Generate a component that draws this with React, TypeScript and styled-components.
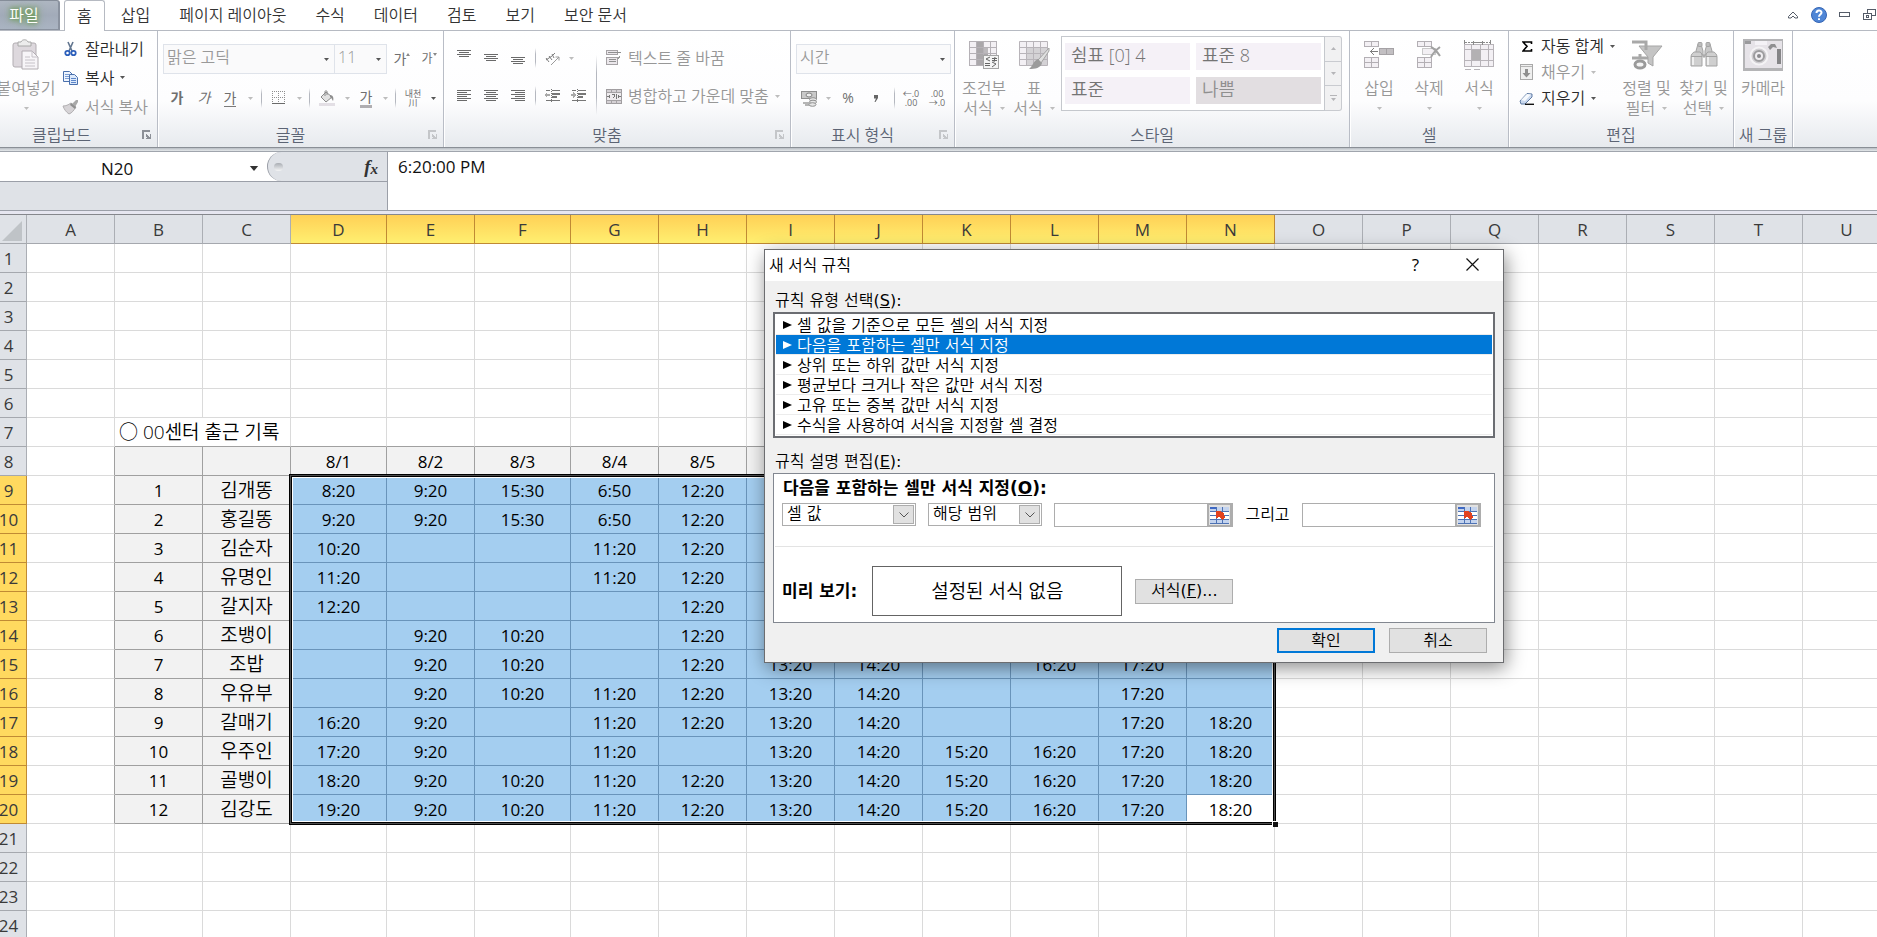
import React from 'react';
import styled, { createGlobalStyle, css } from 'styled-components';

const UI = '"Open Sans", "Noto Sans CJK KR", sans-serif';
const DIALOG = '"DejaVu Sans", "Noto Sans CJK KR", sans-serif';

const GlobalStyle = createGlobalStyle`
  *, *::before, *::after { box-sizing: border-box; }
  body { margin: 0; font-family: ${UI}; font-size: 16px; font-weight: 350; color: #333; background: #fff; overflow: hidden; }
  button, input, select { font: inherit; color: inherit; margin: 0; padding: 0; border: 0; background: none; border-radius: 0; outline: none; }
  button { white-space: nowrap; cursor: default; }
  svg { display: block; flex: none; }
`;

const Page = styled.div`
  position: relative;
  display: flex;
  flex-direction: column;
  height: 100vh;
  overflow: hidden;
`;

/* ---------- tab strip ---------- */

const TabBar = styled.header`
  display: flex;
  align-items: stretch;
  height: 31px;
  flex: none;
  border-bottom: 1px solid #b6bac2;
`;

const FileTab = styled.button`
  width: 60px;
  padding: 0 10px 2px 0;
  color: #fff;
  background: linear-gradient(#aeb6c1, #a2abb9 50%, #aab4c2);
  border-top: 1px solid #858d99;
  border-right: 2px solid #8a929f;
  border-bottom: 1px solid #8a929f;
  border-top-right-radius: 3px;
  text-shadow: 0 0 4px #5c9040, 0 0 6px #6f9f50, 0 0 8px #7fa869;
`;

const Tabs = styled.nav`
  display: flex;
  flex: 1;
  padding-left: 4px;
`;

const Tab = styled.button<{ $active?: boolean }>`
  padding: 0 14px 2px 15px;
  color: #333;
  ${p => p.$active && css`
    padding: 0 12px 2px;
    margin-right: 1px;
    margin-bottom: -1px;
    background: #fff;
    border: 1px solid #b6bac2;
    border-bottom: 0;
    border-radius: 3px 3px 0 0;
  `}
`;

const WindowTools = styled.div`
  display: flex;
  align-items: center;
  gap: 12px;
  overflow: hidden;
  width: 90px;
`;

/* ---------- ribbon ---------- */

const Ribbon = styled.div`
  display: flex;
  flex: none;
  height: 116px;
  overflow: hidden;
  background: linear-gradient(#fff, #fdfdfe 60%, #e7eaee);
`;

const Group = styled.section<{ $w: number }>`
  display: flex;
  flex-direction: column;
  flex: none;
  width: ${p => p.$w}px;
  border-right: 1px solid #b9bdc6;
  box-shadow: 1px 0 #fff;
`;

const GroupBody = styled.div<{ $pad?: string }>`
  display: flex;
  flex: 1;
  min-height: 0;
  padding: ${p => p.$pad ?? '0'};
`;

const GroupLabel = styled.div<{ $inset: number }>`
  display: flex;
  align-items: center;
  justify-content: center;
  height: 24px;
  flex: none;
  line-height: 20px;
  color: #5c6474;
  padding: 0 5px 1px;
  white-space: nowrap;
  & > span { flex: 1; padding-right: ${p => p.$inset}px; text-align: center; }
`;

const Stack = styled.div<{ $gap?: number }>`
  display: flex;
  flex-direction: column;
  flex: none;
  gap: ${p => p.$gap ?? 0}px;
`;

const Row = styled.div`
  display: flex;
  align-items: center;
`;

const BigButton = styled.button<{ $w: number }>`
  display: flex;
  flex-direction: column;
  align-items: center;
  flex: none;
  width: ${p => p.$w}px;
  padding-top: 7px;
  line-height: 20px;
  color: #979797;
`;

const BigIcon = styled.span`
  display: flex;
  align-items: center;
  height: 34px;
  margin-bottom: 6px;
`;

const BigLine = styled.span`
  display: flex;
  align-items: center;
  gap: 7px;
  height: 20px;
`;

const SmallButton = styled.button<{ $h: number; $off?: boolean }>`
  display: flex;
  align-items: center;
  gap: 6px;
  height: ${p => p.$h}px;
  line-height: 20px;
  color: ${p => (p.$off ? '#979797' : '#2b2b2b')};
`;

const IconSlot = styled.span<{ $w: number }>`
  display: flex;
  justify-content: center;
  width: ${p => p.$w}px;
`;

const Tool = styled.button<{ $w: number }>`
  display: flex;
  align-items: center;
  justify-content: center;
  flex: none;
  width: ${p => p.$w}px;
  height: 24px;
  font-size: 14px;
  line-height: 16px;
  color: #6f6f6f;
`;

const Glyph = styled.span<{ $kind?: 'bold' | 'italic' | 'under' | 'bar' | 'small' | 'tiny' }>`
  font-weight: 400;
  ${p => p.$kind === 'bold' && 'font-weight: 700;'}
  ${p => p.$kind === 'italic' && 'font-style: italic;'}
  ${p => p.$kind === 'under' && 'border-bottom: 1px solid #7a7a7a;'}
  ${p => p.$kind === 'bar' && 'border-bottom: 3px solid #b0aeb1;'}
  ${p => p.$kind === 'small' && 'font-size: 12px;'}
  ${p => p.$kind === 'tiny' && 'display: flex; flex-direction: column; align-items: center; font-size: 9px; line-height: 9px;'}
`;

const Divider = styled.span<{ $h: number }>`
  flex: none;
  width: 8px;
  height: ${p => p.$h}px;
  background: linear-gradient(transparent, #b4b7bf 30%, #b4b7bf 70%, transparent) center / 1px 100% no-repeat;
`;

const ComboBox = styled.label<{ $w: number }>`
  position: relative;
  display: block;
  width: ${p => p.$w}px;
  height: 30px;
  border: 1px solid #dfe3ea;
  background: #fafafb;
  & + & { border-left: 0; }
  select {
    appearance: none;
    width: 100%;
    height: 100%;
    padding: 0 0 4px 3px;
    color: #999;
  }
  svg { position: absolute; right: 5px; top: 13px; pointer-events: none; }
`;

const Gallery = styled.div`
  display: flex;
  height: 75px;
  margin: 5px 0 0 2px;
`;

const GalleryGrid = styled.div`
  display: grid;
  grid-template-columns: 125px 125px;
  gap: 6px;
  padding: 6px 3px;
  border: 1px solid #c5c8cd;
  background: #fff;
`;

const StyleCell = styled.button<{ $bad?: boolean }>`
  height: 27px;
  padding: 0 0 3px 6px;
  text-align: left;
  font-size: 18px;
  line-height: 24px;
  color: ${p => (p.$bad ? '#8f8f8f' : '#747474')};
  background: ${p => (p.$bad ? '#e2dee1' : '#f5f1f7')};
`;

const GalleryScroll = styled.div`
  display: flex;
  flex-direction: column;
  width: 17px;
  border: 1px solid #c9cbd0;
  border-left: 0;
  border-radius: 0 3px 3px 0;
  background: #f1f1f2;
  button { display: flex; flex: 1; align-items: center; justify-content: center; }
  button + button { border-top: 1px solid #c9cbd0; }
`;

/* ---------- formula bar ---------- */

const RibbonEdge = styled.div`
  flex: none;
  height: 5px;
  border-top: 1px solid #8a8f96;
  border-bottom: 1px solid #a0a5ad;
  background: linear-gradient(#b9bec4, #e4e7ea);
`;

const FormulaBar = styled.div`
  display: flex;
  flex: none;
  height: 59px;
  border-bottom: 1px solid #9b9fa8;
  background: #fff;
`;

const NamePane = styled.div`
  width: 388px;
  flex: none;
  border-right: 1px solid #9b9fa8;
  background: #dfe2e7;
`;

const NameRow = styled.div`
  display: flex;
  height: 30px;
  border-bottom: 1px solid #9b9fa8;
  background: #fff;
`;

const NameInput = styled.input`
  flex: 1;
  min-width: 0;
  padding: 3px 10px 0 0;
  text-align: center;
  font-size: 17px;
  font-weight: 400;
  color: #111;
`;

const NameDrop = styled.button`
  width: 22px;
  padding: 3px 0 0 5px;
  margin-right: 1px;
`;

const FxPane = styled.div`
  display: flex;
  align-items: center;
  justify-content: space-between;
  width: 120px;
  padding: 0 9px 0 6px;
  border-left: 1px solid #9b9fa8;
  border-radius: 15px 0 0 15px;
  background: #dfe2e7;
`;

const Knob = styled.span`
  width: 9px;
  height: 8px;
  border-radius: 4px;
  background: linear-gradient(#a9adb3, #f4f5f6);
`;

const Fx = styled.button`
  font: italic 700 19px/20px "Liberation Serif", serif;
  color: #333;
  & > sub { font-size: 15px; line-height: 0; vertical-align: -1px; }
`;

const FormulaInput = styled.input`
  flex: 1;
  height: 28px;
  padding: 0 10px;
  font-size: 17px;
  font-weight: 400;
  color: #111;
`;

const SheetEdge = styled.div`
  flex: none;
  height: 4px;
  background: #e6e6f0;
  border-bottom: 1px solid #85878c;
`;

/* ---------- worksheet ---------- */

const Sheet = styled.main`
  position: relative;
  flex: 1;
  min-height: 0;
  overflow: hidden;
`;

const Grid = styled.table`
  width: 1891px;
  table-layout: fixed;
  border-collapse: separate;
  border-spacing: 0;
  font-weight: 400;
`;

const HeadCell = styled.th<{ $on?: boolean }>`
  height: 29px;
  padding: 1px 0 0;
  font-size: 17px;
  line-height: 24px;
  font-weight: 400;
  color: #3a3a3a;
  background: ${p => (p.$on ? 'linear-gradient(#ffd056, #ffef70)' : '#dfe2e7')};
  border-right: 1px solid ${p => (p.$on ? '#c08a34' : '#abaeb4')};
  border-bottom: 1px solid ${p => (p.$on ? '#c08a34' : '#a5a8ae')};
`;

const RowHead = styled(HeadCell)`
  padding: 2px 9px 0 0;
  background: ${p => (p.$on ? '#ffd95f' : '#dfe2e7')};
  & > span { display: flex; justify-content: center; }
`;

type Fill = 'none' | 'label' | 'selected' | 'active';
const fills: Record<Fill, string> = { none: '#fff', label: '#f2f2f2', selected: '#a4cef0', active: '#fff' };
const lines: Record<Fill, string> = { none: '#dadada', label: '#a0a0a0', selected: '#6994ba', active: '#a0a0a0' };

const Cell = styled.td<{ $fill: Fill; $edge?: boolean }>`
  height: 29px;
  padding: 2px 0 0;
  text-align: center;
  white-space: nowrap;
  font-size: 17px;
  line-height: 24px;
  color: #000;
  background: ${p => fills[p.$fill]};
  border-right: 1px solid ${p => (p.$edge ? '#a0a0a0' : lines[p.$fill])};
  border-bottom: 1px solid ${p => lines[p.$fill]};
`;

const TitleCell = styled(Cell)`
  text-align: left;
  padding: 0 0 0 4px;
  font-size: 19px;
  font-weight: 350;
  border-bottom-color: #a0a0a0;
`;

const NameCell = styled(Cell)`
  padding: 0;
  font-size: 19px;
  font-weight: 350;
`;

const Selection = styled.div`
  position: absolute;
  left: 289px;
  top: 259px;
  width: 987px;
  height: 351px;
  border: 3px double #000;
  box-shadow: inset 0 0 0 1px #fff;
  pointer-events: none;
  outline: 1px solid #4d4d4d;
  outline-offset: -2px;
  &::after {
    content: '';
    position: absolute;
    right: -5px;
    bottom: -5px;
    width: 6px;
    height: 6px;
    background: #111;
    border: solid #fff;
    border-width: 1px 0 0 1px;
  }
`;

/* ---------- dialog ---------- */

const Dialog = styled.section`
  position: absolute;
  left: 764px;
  top: 249px;
  width: 740px;
  border: 1px solid #6c6d70;
  background: #f0f0f0;
  box-shadow: 2px 5px 18px rgba(0, 0, 0, 0.45);
  font-family: ${DIALOG};
  color: #000;
`;

const TitleBar = styled.header`
  display: flex;
  align-items: center;
  height: 31px;
  padding: 0 2px 2px 4px;
  background: #fff;
  font-family: ${UI};
`;

const Title = styled.h1`
  flex: 1;
  margin: 0;
  font-size: 16px;
  line-height: 24px;
  font-weight: 350;
`;

const TitleButton = styled.button`
  display: flex;
  align-items: center;
  justify-content: center;
  width: 57px;
  height: 30px;
  font-size: 17px;
  font-weight: 400;
`;

const DialogBody = styled.div`
  padding: 7px 8px 9px;
`;

const Caption = styled.div`
  height: 24px;
  padding-left: 2px;
  line-height: 25px;
`;

const Latin = styled.span`
  font-weight: 400;
`;

const RuleList = styled.ul`
  margin: 0 0 11px;
  padding: 1px;
  list-style: none;
  border: 2px solid #6b6d72;
  background: #fff;
`;

const Rule = styled.li<{ $on?: boolean }>`
  display: flex;
  align-items: center;
  gap: 5px;
  height: 20px;
  padding-left: 7px;
  line-height: 19px;
  border-bottom: 1px solid #ececec;
  color: ${p => (p.$on ? '#fff' : '#000')};
  background: ${p => (p.$on ? '#0078d7' : '#fff')};
  background-clip: padding-box;
  & > span { padding-top: 2px; }
`;

const Editor = styled.div`
  padding: 4px 1px 6px;
  border: 1px solid #828790;
  background: #fff;
`;

const Strong = styled.div`
  flex: none;
  font-size: 17px;
  line-height: 20px;
  font-weight: 700;
`;

const Criteria = styled.div`
  display: flex;
  align-items: flex-start;
  padding: 5px 12px 19px 7px;
`;

const Picker = styled.label<{ $w: number }>`
  position: relative;
  width: ${p => p.$w}px;
  height: 23px;
  margin-right: 12px;
  border: 1px solid #adadad;
  select {
    appearance: none;
    width: 100%;
    height: 100%;
    padding: 0 0 1px 4px;
    line-height: 18px;
  }
`;

const PickerArrow = styled.span`
  position: absolute;
  right: 1px;
  top: 1px;
  display: flex;
  align-items: center;
  justify-content: center;
  width: 21px;
  height: 19px;
  border: 1px solid #adadad;
  background: #e1e1e1;
  pointer-events: none;
`;

const RefBox = styled.div`
  display: flex;
  width: 179px;
  height: 24px;
  border: 1px solid #adadad;
  input { flex: 1; min-width: 0; padding: 0 3px; }
  button {
    display: flex;
    align-items: center;
    justify-content: center;
    width: 25px;
    border: 2px solid #adadad;
    border-top-width: 1px;
    border-bottom-width: 1px;
    background: #e1e1e1;
  }
`;

const And = styled.span`
  flex: 1;
  text-align: center;
  line-height: 23px;
`;

const PreviewRow = styled.div`
  display: flex;
  align-items: center;
  padding: 19px 7px 0;
  border-top: 1px solid #e3e3e3;
`;

const Preview = styled.div`
  width: 250px;
  height: 50px;
  margin: 0 13px 0 15px;
  border: 1px solid #646464;
  font-family: ${UI};
  font-size: 19px;
  line-height: 48px;
  text-align: center;
`;

const PushButton = styled.button<{ $primary?: boolean }>`
  width: 98px;
  height: 25px;
  line-height: 20px;
  background: #e1e1e1;
  border: ${p => (p.$primary ? '2px solid #0078d7' : '1px solid #adadad')};
`;

const Actions = styled.footer`
  display: flex;
  justify-content: flex-end;
  gap: 14px;
  padding: 5px 8px 0 0;
`;

/* ---------- drawings ---------- */

const Arrow = ({ c = '#bdbdbd', s = 5 }: { c?: string; s?: number }) => (
  <svg width={s} height={Math.ceil(s / 2)} viewBox="0 0 10 6"><path d="M0 0h10L5 6z" fill={c} /></svg>
);

const Lines = ({ rows, h = 12 }: { rows: number[][]; h?: number }) => (
  <svg width="14" height={h} shapeRendering="crispEdges">
    {rows.map(([x, w], i) => <rect key={i} x={x} y={i * 2} width={w} height="1" fill="#6a6a6a" />)}
  </svg>
);

const Launcher = ({ off }: { off?: boolean }) => (
  <svg width="10" height="10" shapeRendering="crispEdges" fill={off ? '#c4c6c9' : '#8c9097'}>
    <path d="M0 0h8v2H2v7H0zM4 4h1v1h1v1h1v1h1V4h1v5H4V8h1V7H4z" />
  </svg>
);

const PasteIcon = () => (
  <svg width="28" height="32" viewBox="0 0 28 32" fill="none" stroke="#b2adb2">
    <rect x="1" y="4" width="23" height="24" rx="2" fill="#ddd8dd" />
    <path d="M6 3h3c1-3 6-3 7 0h3v4H6z" fill="#ececec" stroke="#a8a8a8" />
    <path d="M10 12h10l6 6v12H10z" fill="#f7f5f8" />
    <path d="M20 12v6h6M13 18h5M13 21h10M13 24h10M13 27h10" stroke="#c6c2c8" />
  </svg>
);
const CutIcon = () => (
  <svg width="14" height="16" viewBox="0 0 14 16" fill="none">
    <path d="M4 1l4 9M9 1L5 10" stroke="#61758f" strokeWidth="1.6" />
    <circle cx="3.5" cy="12" r="2.2" stroke="#2c5fbb" strokeWidth="1.8" />
    <circle cx="9.5" cy="12" r="2.2" stroke="#2c5fbb" strokeWidth="1.8" />
  </svg>
);
const CopyIcon = () => (
  <svg width="16" height="14" viewBox="0 0 16 14" stroke="#4a70ad">
    <path d="M.5.5h6l3 3v7h-9z" fill="#eef4fd" />
    <path d="M2 3.5h4M2 5.500h4M2 7.500h4" stroke="#7c9ed4" />
    <path d="M6.500 3.500h5l3 3v7h-8z" fill="#dce9fb" />
    <path d="M8 7.500h5M8 9.500h5M8 11.500h5" stroke="#5c86c9" />
  </svg>
);
const BrushIcon = () => (
  <svg width="17" height="16" viewBox="0 0 17 16">
    <path d="M10 5l4-4h2v2l-3 5z" fill="#a9a9a9" />
    <path d="M1 7c3 0 5-1 8-3l5 4c-2 3-4 6-7 7-3-2-5-5-6-8z" fill="#d6d3d6" stroke="#b1afb1" />
    <path d="M9 4l5 4-1 2-5-4z" fill="#8f8f8f" />
  </svg>
);
const BorderIcon = () => (
  <svg width="14" height="14" shapeRendering="crispEdges" stroke="#8f8f8f" fill="none">
    <path d="M0 .5h13M0 6.500h13M.5 0v12M6.500 0v12M12.500 0v12" strokeDasharray="1 1" />
    <path d="M0 12.500h13" stroke="#6a6a6a" />
  </svg>
);
const FillIcon = () => (
  <svg width="16" height="17" viewBox="0 0 16 17">
    <path d="M2 7l5-5 6 5-6 5z" fill="#e2e2e2" stroke="#8a8a8a" />
    <path d="M6 6V1.500c0-1 2-1 2 0V5" fill="none" stroke="#8a8a8a" />
    <path d="M11 5c3 0 4 3 3 6-1-1-1-3-3-4z" fill="#8d8d8d" />
    <rect y="13" width="16" height="3" fill="#e3dfe5" />
  </svg>
);
const RotateIcon = () => (
  <svg width="16" height="15" viewBox="0 0 16 15" fill="none" stroke="#7d7d7d">
    <path d="M1 7l3 4M4 5l3 4M7 3l2 4M1 9l3-2M4 7l3-2M7 5l3-3" />
    <path d="M6 14l8-8M10.500 6H14v3.500" stroke="#9a9a9a" />
  </svg>
);
const IndentIcon = ({ right }: { right?: boolean }) => (
  <svg width="17" height="16" shapeRendering="crispEdges">
    <path d="M8 2h8v1H8zM8 5h8v2H8zM8 8h5v2H8zM2 12h14v1H2zM2 2h4v1H2z" fill="#777" />
    <path d="M7.500 1v14" stroke="#777" strokeDasharray="1 1" />
    <path d={right ? 'M6 7L3 4v2H1v2h2v2z' : 'M0 7l3-3v2h3v2H3v2z'} fill="#a9a9a9" />
  </svg>
);
const WrapIcon = () => (
  <svg width="16" height="16" viewBox="0 0 16 16" shapeRendering="crispEdges">
    <path d="M.5.5h11v4H.5zM.5 7.500h11v7H.5z" fill="#ebe7eb" stroke="#a5a2a5" />
    <path d="M2 2h13v1H2zM3 9h7v1H3zM3 11h7v1H3z" fill="#909090" />
    <path d="M14 3v5h-1v2l-2-2 2-2h1z" fill="#999" />
  </svg>
);
const MergeIcon = () => (
  <svg width="16" height="15" viewBox="0 0 16 15" shapeRendering="crispEdges">
    <path d="M.5.5h15v14H.5z" fill="#d5d1d5" stroke="#a09da0" />
    <path d="M0 3.500h16M0 11.500h16M5.500 0v4M10.500 0v4M5.500 11v4M10.500 11v4" stroke="#a5a2a5" />
    <path d="M1 4h14v7H1z" fill="#eeebee" />
    <path d="M1 7h3v1H1zM12 7h3v1h-3zM3 6h1v3H3zM12 6h1v3h-1zM6 5h3v1H6zM8 6h1v2H8zM7 8h1v1H7zM10 5h1v5h-1z" fill="#777" />
  </svg>
);
const MoneyIcon = () => (
  <svg width="17" height="17" viewBox="0 0 17 17">
    <rect x=".5" y="1.500" width="15" height="7" fill="#c9c9c9" stroke="#8e8e8e" />
    <ellipse cx="8" cy="5" rx="3" ry="2" fill="#efefef" stroke="#808080" />
    <path d="M2 13h6M4 15h7" stroke="#b5b5b5" strokeWidth="2" />
    <ellipse cx="12" cy="9.500" rx="3.500" ry="1.800" fill="#e6e6e6" stroke="#929292" />
    <ellipse cx="12" cy="12" rx="3.500" ry="1.800" fill="#e6e6e6" stroke="#929292" />
    <ellipse cx="11.500" cy="14.500" rx="3.500" ry="1.800" fill="#e6e6e6" stroke="#929292" />
  </svg>
);
const CondIcon = () => (
  <svg width="32" height="30" viewBox="0 0 32 30" shapeRendering="crispEdges">
    <path d="M1 1h28v25H1z" fill="#f3f0f4" />
    <path d="M8 1h7v6h4v6h1v6h-5v7H8z" fill="#aaa7aa" />
    <path d="M15 7h5v6h-5z" fill="#bcb9bc" />
    <path d="M1.500 1.500h27v24h-27zM1 7.500h28M1 13.500h28M1 19.500h28M8.500 1v25M15.500 1v25M22.500 1v25" fill="none" stroke="#b5b1b6" />
    <path d="M15.500 15.500h15v13h-15z" fill="#f4f4f4" stroke="#a4a4a4" />
    <path d="M22 17l-4 2 4 2M17 23.500h5M17 25.500h5M24 18.500h5M24 20.500h5M27 17l-1 5M24 22l4 2-4 3" fill="none" stroke="#666" shapeRendering="auto" />
  </svg>
);
const TableIcon = () => (
  <svg width="32" height="30" viewBox="0 0 32 30">
    <path d="M1 1h28v25H1z" fill="#f3f0f4" />
    <path d="M8 7h21v19H8z" fill="#d4d2d5" />
    <path d="M1.500 1.500h28v24h-28zM1 7.500h29M1 13.500h29M1 19.500h29M8.500 1v25M15.500 1v25M22.500 1v25" fill="none" stroke="#b8b4b9" />
    <path d="M31 8L20 20l3 3 8-12z" fill="#e0e0e0" stroke="#a2a2a2" />
    <path d="M20 19l4 4c-1 5-7 6-13 6 4-3 4-8 9-10z" fill="#9b9b9b" />
  </svg>
);
const InsertIcon = () => (
  <svg width="32" height="30" viewBox="0 0 32 30" fill="#f3f0f4" stroke="#b3afb4" shapeRendering="crispEdges">
    <path d="M1.500 1.500h14v5h-14zM8.500 1v6M1.500 17.500h14v10h-14zM1 22.500h15M8.500 17v11" />
    <path d="M16.500 8.500h14v6h-14zM23.500 8v7" fill="#c2bfc2" stroke="#a5a2a5" />
    <path d="M7 11.500h8M11 8l-3.500 3.500L11 15" fill="none" stroke="#7c7c7c" />
  </svg>
);
const DeleteIcon = () => (
  <svg width="30" height="30" viewBox="0 0 30 30" fill="#f3f0f4" stroke="#b3afb4">
    <path d="M3.500 1.500h14v5h-14zM10.500 1v6M3.500 17.500h14v10h-14zM3 22.500h15M10.500 17v11" shapeRendering="crispEdges" />
    <path d="M8.500 8.500h13v6h-13z" strokeDasharray="1 1" stroke="#999" />
    <path d="M17 7c4 2 7 6 9 9M26 7c-4 3-7 6-9 10" fill="none" stroke="#a2a2a2" strokeWidth="2" />
  </svg>
);
const FormatIcon = () => (
  <svg width="32" height="30" viewBox="0 0 32 30" fill="none" stroke="#b8b4b9" shapeRendering="crispEdges">
    <path d="M1.500 4.500h29v22h-29z" fill="#f3f0f4" />
    <path d="M1 9.500h30M1 20.500h30M8.500 4v23M17.500 4v23M25.500 4v23" />
    <path d="M9 10h9v10H9z" fill="#b3b1b3" stroke="none" />
    <path d="M2 2.500h27" strokeDasharray="2 1" stroke="#8a8a8a" />
    <path d="M9 2.500h10M10.500 1v4M19.500 1v4M1.500 0v4M27.500 0v4" stroke="#8a8a8a" />
    <path d="M2 29.500h6M11 29.500h6" />
  </svg>
);
const DownIcon = () => (
  <svg width="14" height="16" viewBox="0 0 14 16">
    <rect x=".5" y=".5" width="12" height="15" fill="#efefef" stroke="#a9a9a9" />
    <path d="M1 2.500h11" stroke="#b5b5b5" />
    <path d="M5 5h3v4h2.500L6.500 13.500 2.500 9H5z" fill="#8f8f8f" />
  </svg>
);
const EraserIcon = () => (
  <svg width="16" height="13" viewBox="0 0 16 13">
    <path d="M1 9l7-7.500 5 .5v3l-7 7H2z" fill="#c9d8ee" stroke="#5f7ba4" />
    <path d="M2 8l6-6 4 .5L6 9z" fill="#f6f9fd" />
    <path d="M6 12.300h9" stroke="#111" strokeWidth="1.400" />
  </svg>
);
const SortIcon = () => (
  <svg width="32" height="32" viewBox="0 0 32 32">
    <path d="M8 7h23L22 18v9l-5-3v-6z" fill="#c4c4c4" stroke="#a5a5a5" />
    <path d="M1 3h14v8" fill="none" stroke="#a8a8a8" strokeWidth="3" />
    <path d="M1 19h16M9 15v4" stroke="#a8a8a8" strokeWidth="3" />
    <ellipse cx="9" cy="25.500" rx="5" ry="3.500" fill="#f4f4f4" stroke="#9a9a9a" strokeWidth="3" />
  </svg>
);
const FindIcon = () => (
  <svg width="28" height="28" viewBox="0 0 28 28" fill="#bdbdbd" stroke="#a3a3a3">
    <path d="M6 10l2-7h3l2 7v6h2v-6l2-7h3l2 7v4H6z" fill="#c9c9c9" />
    <rect x="8" y="1.500" width="4" height="4" rx="1" /><rect x="16" y="1.500" width="4" height="4" rx="1" />
    <path d="M1 16c0-3 2-4 3-5h6c2 1 2 3 2 5v9H1zM16 16c0-2 0-4 2-5h6c1 1 3 2 3 5v9H16z" fill="#cfcfcf" />
    <path d="M3 16v8M18 16v8" stroke="#efefef" strokeWidth="2" />
    <path d="M1 15.500h11M16 15.500h11" />
  </svg>
);
const CameraIcon = () => (
  <svg width="40" height="32" viewBox="0 0 40 32">
    <rect width="40" height="32" fill="#b4b4b6" />
    <rect x="2" y="2" width="37" height="27" fill="#e6e3e8" />
    <path d="M2 2h6v3H2z" fill="#9a9a9c" />
    <path d="M25 8l3-3h4l2 4-4-1-3 3z" fill="#8f8f91" />
    <path d="M12 2h12v4H12z" fill="#f4f2f6" />
    <rect x="34" y="10" width="4" height="15" fill="#858587" />
    <circle cx="16" cy="17" r="8.500" fill="#cfcdd1" stroke="#f4f3f5" strokeWidth="2" />
    <circle cx="16" cy="17" r="5" fill="#efedf0" stroke="#9c9c9e" strokeWidth="2" />
    <circle cx="16" cy="17" r="2" fill="#8a8a8d" />
  </svg>
);
const RefIcon = () => (
  <svg width="19" height="17" viewBox="0 0 19 17" shapeRendering="crispEdges">
    <rect width="19" height="17" fill="#fff" />
    <path d="M0 0h19v4H0zM0 12h19v4H0z" fill="#c3d3ee" />
    <path d="M0 0h7v2H0z" fill="#3e68c4" />
    <path d="M0 4.500h19M0 8.500h19M0 12.500h19M0 16.500h19M6.500 0v17M12.500 0v17" stroke="#4d72b4" />
    <path d="M6 4h4l4 2 1 5-3 2-2-3-4 1z" fill="#e2421f" />
  </svg>
);

/* ---------- data ---------- */

const columns = 'ABCDEFGHIJKLMNOPQRSTU'.split('');
const wide = ['D', 'F'];
const dates = ['8/1', '8/2', '8/3', '8/4', '8/5'];
const people = ['김개똥', '홍길똥', '김순자', '유명인', '갈지자', '조뱅이', '조밥', '우유부', '갈매기', '우주인', '골뱅이', '김강도'];
const times = [
  '8:20|9:20|15:30|6:50|12:20',
  '9:20|9:20|15:30|6:50|12:20',
  '10:20|||11:20|12:20',
  '11:20|||11:20|12:20',
  '12:20||||12:20',
  '|9:20|10:20||12:20',
  '|9:20|10:20||12:20|13:20|14:20||16:20|17:20|',
  '|9:20|10:20|11:20|12:20|13:20|14:20|||17:20|',
  '16:20|9:20||11:20|12:20|13:20|14:20|||17:20|18:20',
  '17:20|9:20||11:20||13:20|14:20|15:20|16:20|17:20|18:20',
  '18:20|9:20|10:20|11:20|12:20|13:20|14:20|15:20|16:20|17:20|18:20',
  '19:20|9:20|10:20|11:20|12:20|13:20|14:20|15:20|16:20|17:20|18:20',
].map(line => line.split('|'));

const rules = [
  '셀 값을 기준으로 모든 셀의 서식 지정',
  '다음을 포함하는 셀만 서식 지정',
  '상위 또는 하위 값만 서식 지정',
  '평균보다 크거나 작은 값만 서식 지정',
  '고유 또는 중복 값만 서식 지정',
  '수식을 사용하여 서식을 지정할 셀 결정',
];

function SheetRow({ n }: { n: number }) {
  const cells: React.ReactNode[] = [];
  for (let c = 0; c < columns.length; c++) {
    const key = columns[c];
    const inTable = c >= 1 && c <= 13 && n >= 8 && n <= 20;
    if (n === 7 && c === 1) {
      cells.push(<TitleCell key={key} colSpan={2} $fill="none">○ 00센터 출근 기록</TitleCell>);
      c++;
    } else if (!inTable) {
      const above = n === 7 && c >= 1 && c <= 13;
      cells.push(above
        ? <TitleCell key={key} $fill="none" />
        : <Cell key={key} $fill="none" $edge={c === 0 && n >= 8 && n <= 20} />);
    } else if (n === 8) {
      cells.push(<Cell key={key} $fill="label">{c >= 3 ? dates[c - 3] : ''}</Cell>);
    } else if (c === 1) {
      cells.push(<Cell key={key} $fill="label">{n - 8}</Cell>);
    } else if (c === 2) {
      cells.push(<NameCell key={key} $fill="label">{people[n - 9]}</NameCell>);
    } else {
      cells.push(
        <Cell key={key} $fill={n === 20 && c === 13 ? 'active' : 'selected'}>{times[n - 9][c - 3]}</Cell>,
      );
    }
  }
  return (
    <tr>
      <RowHead scope="row" $on={n >= 9 && n <= 20}><span>{n}</span></RowHead>
      {cells}
    </tr>
  );
}

const Big = ({ w, icon, a, b, drop }: { w: number; icon: React.ReactNode; a: string; b?: string; drop?: boolean }) => (
  <BigButton $w={w}>
    <BigIcon>{icon}</BigIcon>
    <BigLine>{a}</BigLine>
    <BigLine>{b}{drop && <Arrow />}</BigLine>
  </BigButton>
);

const Label = ({ children, launch, inset }: { children: string; launch?: 'on' | 'off'; inset?: number }) => (
  <GroupLabel $inset={inset ?? (launch ? 10 : 0)}>
    <span>{children}</span>{launch && <Launcher off={launch === 'off'} />}
  </GroupLabel>
);

export default function App() {
  return (
    <Page>
      <GlobalStyle />
      <TabBar>
        <FileTab>파일</FileTab>
        <Tabs>
          <Tab $active>홈</Tab>
          {['삽입', '페이지 레이아웃', '수식', '데이터', '검토', '보기', '보안 문서'].map(t => <Tab key={t}>{t}</Tab>)}
        </Tabs>
        <WindowTools>
          <button aria-label="리본 최소화">
            <svg width="12" height="10" viewBox="0 0 12 10" fill="none" stroke="#555c68"><path d="M1.500 6.500L6 2l4.500 4.500v1.500H8L6 6 4 8H1.500z" /></svg>
          </button>
          <button aria-label="도움말">
            <svg width="16" height="16" viewBox="0 0 16 16">
              <circle cx="8" cy="8" r="7.500" fill="#4f86d6" stroke="#3565b4" />
              <path d="M5.500 6c0-3.500 5-3.300 5-.4C10.500 7.500 8 7.700 8 9.700M8 11.200v1.800" fill="none" stroke="#fff" strokeWidth="2" />
            </svg>
          </button>
          <button aria-label="최소화">
            <svg width="12" height="6" shapeRendering="crispEdges"><rect x=".5" y=".5" width="10" height="4" fill="#fff" stroke="#555c68" /></svg>
          </button>
          <button aria-label="창 복원">
            <svg width="14" height="12" shapeRendering="crispEdges" fill="#fff" stroke="#555c68">
              <rect x="4.500" y=".5" width="8" height="6" /><rect x=".5" y="4.500" width="8" height="6" /><rect x="3.500" y="6.500" width="2" height="2" />
            </svg>
          </button>
        </WindowTools>
      </TabBar>

      <Ribbon>
        <Group $w={158}>
          <GroupBody>
            <Big w={52} icon={<PasteIcon />} a="붙여넣기" drop />
            <GroupBody $pad="3px 0 0 10px">
              <Stack>
                <SmallButton $h={29}><IconSlot $w={17}><CutIcon /></IconSlot>잘라내기</SmallButton>
                <SmallButton $h={29}><IconSlot $w={17}><CopyIcon /></IconSlot>복사<Arrow c="#555" /></SmallButton>
                <SmallButton $h={29} $off><IconSlot $w={17}><BrushIcon /></IconSlot>서식 복사</SmallButton>
              </Stack>
            </GroupBody>
          </GroupBody>
          <Label launch="on" inset={24}>클립보드</Label>
        </Group>

        <Group $w={286}>
          <GroupBody $pad="13px 0 0 5px">
            <Stack $gap={12}>
              <Row>
                <ComboBox $w={172}><select aria-label="글꼴"><option>맑은 고딕</option></select><Arrow c="#555" /></ComboBox>
                <ComboBox $w={52}><select aria-label="글꼴 크기"><option>11</option></select><Arrow c="#555" /></ComboBox>
                <Tool $w={30} aria-label="글꼴 크기 크게"><Glyph>가</Glyph><svg width="4" height="12"><path d="M0 3l2-3 2 3z" fill="#888" /></svg></Tool>
                <Tool $w={24} aria-label="글꼴 크기 작게"><Glyph $kind="small">가</Glyph><svg width="4" height="12"><path d="M0 0h4L2 3z" fill="#888" /></svg></Tool>
              </Row>
              <Row>
                <Tool $w={28}><Glyph $kind="bold">가</Glyph></Tool>
                <Tool $w={26}><Glyph $kind="italic">가</Glyph></Tool>
                <Tool $w={26}><Glyph $kind="under">가</Glyph></Tool>
                <Tool $w={14} aria-label="밑줄 종류"><Arrow /></Tool>
                <Divider $h={20} />
                <Tool $w={28} aria-label="테두리"><BorderIcon /></Tool>
                <Tool $w={12} aria-label="테두리 종류"><Arrow /></Tool>
                <Divider $h={20} />
                <Tool $w={28} aria-label="채우기 색"><FillIcon /></Tool>
                <Tool $w={12} aria-label="채우기 색 목록"><Arrow /></Tool>
                <Tool $w={26}><Glyph $kind="bar">가</Glyph></Tool>
                <Tool $w={12} aria-label="글꼴 색 목록"><Arrow /></Tool>
                <Divider $h={20} />
                <Tool $w={28}><Glyph $kind="tiny"><span>내천</span><span>川</span></Glyph></Tool>
                <Tool $w={12} aria-label="윗주 목록"><Arrow c="#555" /></Tool>
              </Row>
            </Stack>
          </GroupBody>
          <Label launch="off">글꼴</Label>
        </Group>

        <Group $w={347}>
          <GroupBody $pad="15px 0 0 6px">
            <Stack $gap={14}>
              <Row>
                <Tool $w={27} aria-label="위쪽 맞춤"><Lines rows={[[0, 14], [2, 10], [0, 14], [2, 10]]} h={16} /></Tool>
                <Tool $w={27} aria-label="가운데 맞춤"><Lines rows={[[0, 14], [2, 10], [0, 14], [2, 10]]} h={8} /></Tool>
                <Tool $w={27} aria-label="아래쪽 맞춤"><Lines rows={[[0, 0], [0, 0], [0, 0], [0, 14], [2, 10], [0, 14], [2, 10]]} h={14} /></Tool>
                <Divider $h={20} />
                <Tool $w={28} aria-label="방향"><RotateIcon /></Tool>
                <Tool $w={8} aria-label="방향 목록"><Arrow /></Tool>
              </Row>
              <Row>
                <Tool $w={27} aria-label="왼쪽 맞춤"><Lines rows={[[0, 14], [0, 10], [0, 14], [0, 10], [0, 14], [0, 10]]} /></Tool>
                <Tool $w={27} aria-label="가운데"><Lines rows={[[0, 14], [2, 10], [0, 14], [2, 10], [0, 14], [2, 10]]} /></Tool>
                <Tool $w={27} aria-label="오른쪽 맞춤"><Lines rows={[[0, 14], [4, 10], [0, 14], [4, 10], [0, 14], [4, 10]]} /></Tool>
                <Divider $h={20} />
                <Tool $w={26} aria-label="내어쓰기"><IndentIcon /></Tool>
                <Tool $w={27} aria-label="들여쓰기"><IndentIcon right /></Tool>
              </Row>
            </Stack>
            <Row><Divider $h={60} /></Row>
            <GroupBody $pad="0 0 0 6px">
              <Stack $gap={14}>
                <SmallButton $h={24} $off><WrapIcon />텍스트 줄 바꿈</SmallButton>
                <SmallButton $h={24} $off><MergeIcon />병합하고 가운데 맞춤<Arrow /></SmallButton>
              </Stack>
            </GroupBody>
          </GroupBody>
          <Label launch="off">맞춤</Label>
        </Group>

        <Group $w={164}>
          <GroupBody $pad="13px 0 0 5px">
            <Stack $gap={12}>
              <ComboBox $w={155}><select aria-label="표시 형식"><option>시간</option></select><Arrow c="#555" /></ComboBox>
              <Row>
                <Tool $w={26} aria-label="회계 표시 형식"><MoneyIcon /></Tool>
                <Tool $w={12} aria-label="통화 목록"><Arrow /></Tool>
                <Tool $w={28}><Glyph>%</Glyph></Tool>
                <Tool $w={28} aria-label="쉼표 스타일"><svg width="6" height="9"><path d="M1 1h4v3L2.500 8H1.500L3 4.500H1z" fill="#666" /></svg></Tool>
                <Divider $h={22} />
                <Tool $w={26}><Glyph $kind="tiny"><span>←.0</span><span>.00</span></Glyph></Tool>
                <Tool $w={26}><Glyph $kind="tiny"><span>.00</span><span>→.0</span></Glyph></Tool>
              </Row>
            </Stack>
          </GroupBody>
          <Label launch="off">표시 형식</Label>
        </Group>

        <Group $w={395}>
          <GroupBody $pad="0 0 0 4px">
            <Big w={50} icon={<CondIcon />} a="조건부" b="서식" drop />
            <Big w={50} icon={<TableIcon />} a="표" b="서식" drop />
            <Gallery>
              <GalleryGrid>
                <StyleCell>쉼표 [0] 4</StyleCell>
                <StyleCell>표준 8</StyleCell>
                <StyleCell>표준</StyleCell>
                <StyleCell $bad>나쁨</StyleCell>
              </GalleryGrid>
              <GalleryScroll>
                <button aria-label="위로"><svg width="5" height="3"><path d="M0 3l2.500-3L5 3z" fill="#b5b5b8" /></svg></button>
                <button aria-label="아래로"><Arrow c="#b5b5b8" /></button>
                <button aria-label="자세히"><svg width="7" height="6"><path d="M0 0h7v1H0zM1 3h5L3.500 6z" fill="#b5b5b8" /></svg></button>
              </GalleryScroll>
            </Gallery>
          </GroupBody>
          <Label>스타일</Label>
        </Group>

        <Group $w={159}>
          <GroupBody $pad="0 0 0 4px">
            <Big w={50} icon={<InsertIcon />} a="삽입" drop />
            <Big w={50} icon={<DeleteIcon />} a="삭제" drop />
            <Big w={50} icon={<FormatIcon />} a="서식" drop />
          </GroupBody>
          <Label>셀</Label>
        </Group>

        <Group $w={225}>
          <GroupBody>
            <GroupBody $pad="2px 0 0 10px">
              <Stack>
                <SmallButton $h={26}>
                  <IconSlot $w={16}><svg width="11" height="11" viewBox="0 0 11 11"><path d="M9.500 3V1H1l4 4.300L1 10h8.500V8" fill="none" stroke="#000" strokeWidth="1.600" /></svg></IconSlot>
                  자동 합계<Arrow c="#555" />
                </SmallButton>
                <SmallButton $h={26} $off><IconSlot $w={16}><DownIcon /></IconSlot>채우기<Arrow /></SmallButton>
                <SmallButton $h={26}><IconSlot $w={16}><EraserIcon /></IconSlot>지우기<Arrow c="#555" /></SmallButton>
              </Stack>
            </GroupBody>
            <Big w={55} icon={<SortIcon />} a="정렬 및" b="필터" drop />
            <Big w={59} icon={<FindIcon />} a="찾기 및" b="선택" drop />
          </GroupBody>
          <Label>편집</Label>
        </Group>

        <Group $w={59}>
          <GroupBody><Big w={58} icon={<CameraIcon />} a="카메라" /></GroupBody>
          <Label>새 그룹</Label>
        </Group>
      </Ribbon>
      <RibbonEdge />

      <FormulaBar>
        <NamePane>
          <NameRow>
            <NameInput aria-label="이름 상자" defaultValue="N20" />
            <NameDrop aria-label="이름 목록"><Arrow c="#333" s={10} /></NameDrop>
            <FxPane><Knob /><Fx aria-label="함수 삽입">f<sub>x</sub></Fx></FxPane>
          </NameRow>
        </NamePane>
        <FormulaInput aria-label="수식 입력줄" defaultValue="6:20:00 PM" />
      </FormulaBar>
      <SheetEdge />

      <Sheet>
        <Grid>
          <colgroup>
            <col width={27} />
            {columns.map(c => <col key={c} width={wide.includes(c) ? 96 : 88} />)}
          </colgroup>
          <thead>
            <tr>
              <HeadCell aria-label="모두 선택">
                <svg width="26" height="27"><path d="M22 5v20H2z" fill="#bfc3c7" /></svg>
              </HeadCell>
              {columns.map((c, i) => <HeadCell key={c} scope="col" $on={i >= 3 && i <= 13}>{c}</HeadCell>)}
            </tr>
          </thead>
          <tbody>
            {Array.from({ length: 24 }, (_, i) => <SheetRow key={i} n={i + 1} />)}
          </tbody>
        </Grid>
        <Selection />
      </Sheet>

      <Dialog role="dialog" aria-labelledby="rule-title">
        <TitleBar>
          <Title id="rule-title">새 서식 규칙</Title>
          <TitleButton>?</TitleButton>
          <TitleButton aria-label="닫기">
            <svg width="13" height="13" viewBox="0 0 13 13"><path d="M.5.5l12 12M12.500.5l-12 12" stroke="#111" strokeWidth="1.200" /></svg>
          </TitleButton>
        </TitleBar>
        <DialogBody>
          <Caption>규칙 유형 선택<Latin>(<u>S</u>):</Latin></Caption>
          <RuleList>
            {rules.map((r, i) => (
              <Rule key={r} $on={i === 1}>
                <svg width="9" height="8"><path d="M0 0l9 4-9 4z" fill="currentColor" /></svg><span>{r}</span>
              </Rule>
            ))}
          </RuleList>
          <Caption>규칙 설명 편집<Latin>(<u>E</u>):</Latin></Caption>
          <Editor>
            <GroupBody $pad="0 8px"><Strong>다음을 포함하는 셀만 서식 지정(<u>O</u>):</Strong></GroupBody>
            <Criteria>
              <Picker $w={134}>
                <select aria-label="대상"><option>셀 값</option></select>
                <PickerArrow><svg width="10" height="6" fill="none" stroke="#555"><path d="M.5.5L5 5 9.500.5" /></svg></PickerArrow>
              </Picker>
              <Picker $w={114}>
                <select aria-label="조건"><option>해당 범위</option></select>
                <PickerArrow><svg width="10" height="6" fill="none" stroke="#555"><path d="M.5.5L5 5 9.500.5" /></svg></PickerArrow>
              </Picker>
              <RefBox><input aria-label="최소값" /><button aria-label="최소값 셀 선택"><RefIcon /></button></RefBox>
              <And>그리고</And>
              <RefBox><input aria-label="최대값" /><button aria-label="최대값 셀 선택"><RefIcon /></button></RefBox>
            </Criteria>
            <PreviewRow>
              <Strong>미리 보기:</Strong>
              <Preview>설정된 서식 없음</Preview>
              <PushButton>서식<Latin>(<u>F</u>)...</Latin></PushButton>
            </PreviewRow>
          </Editor>
          <Actions>
            <PushButton $primary>확인</PushButton>
            <PushButton>취소</PushButton>
          </Actions>
        </DialogBody>
      </Dialog>
    </Page>
  );
}
